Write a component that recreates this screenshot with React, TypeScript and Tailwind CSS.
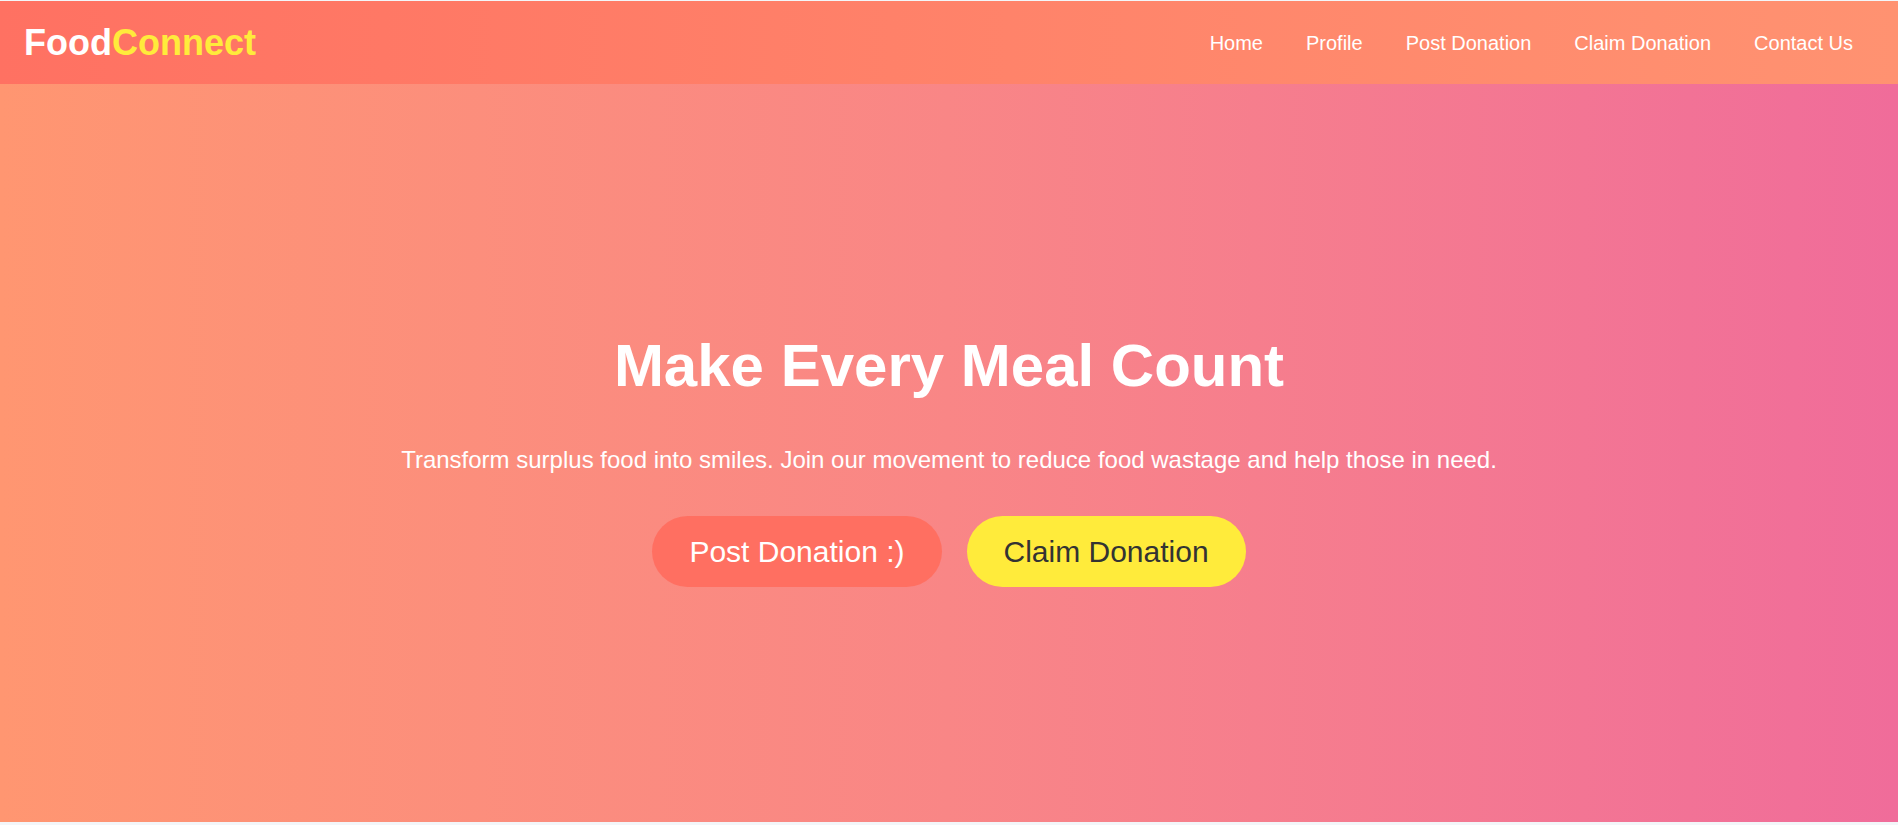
const links = ["Home", "Profile", "Post Donation", "Claim Donation", "Contact Us"];

export default function App() {
  return (
    <div className="min-h-screen bg-[#f3f6f9] pt-px font-['Liberation_Sans',Arial,sans-serif]">
      {/* Navbar */}
      <nav className="flex h-[83px] items-center justify-between bg-gradient-to-r from-[#ff7162] to-[#ff9271] pl-[24px] pr-[45px]">
        <div className="text-[36px] font-bold leading-none text-white">
          Food<span className="text-[#ffeb3b]">Connect</span>
        </div>
        <ul className="flex items-center gap-[43px]">
          {links.map((link) => (
            <li key={link}>
              <a href="#" className="text-[20px] text-white">
                {link}
              </a>
            </li>
          ))}
        </ul>
      </nav>

      {/* Hero */}
      <section className="flex h-[738px] flex-col items-center justify-center bg-gradient-to-r from-[#ff9671] via-[#f98686] to-[#f06c9a] pt-[12px] text-center text-white">
        <h1 className="mb-[46px] text-[60px] font-bold leading-[69px]">Make Every Meal Count</h1>
        <p className="mb-[42px] text-[24px] leading-[28px]">
          Transform surplus food into smiles. Join our movement to reduce food wastage and help those in need.
        </p>
        <div className="flex gap-[25px]">
          <button className="rounded-full bg-[#ff6f61] px-[37px] py-[18px] text-[30px] leading-[35px] text-white">
            Post Donation :)
          </button>
          <button className="rounded-full bg-[#ffeb3b] px-[37px] py-[18px] text-[30px] leading-[35px] text-[#333333]">
            Claim Donation
          </button>
        </div>
      </section>
    </div>
  );
}
